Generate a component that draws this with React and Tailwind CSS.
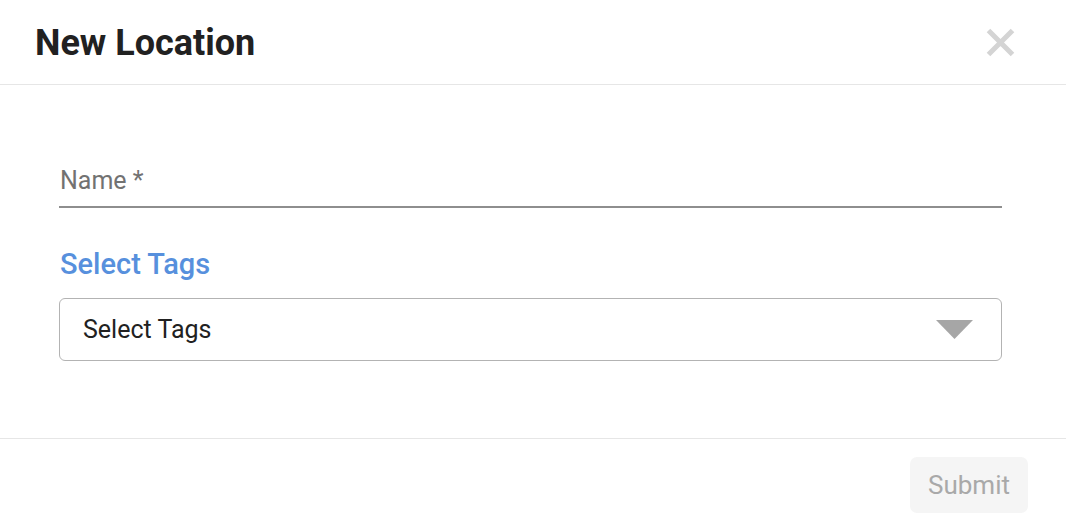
export default function App() {
  return (
    <div className="w-[1066px] h-[526px] bg-white flex flex-col" style={{ fontFamily: 'Roboto, "Liberation Sans", sans-serif' }}>
      <div className="h-[85px] flex items-center justify-between pl-[35px] pr-[51px] border-b border-[#e6e6e6] shrink-0">
        <h1 className="text-[36px] font-bold text-[#212121] leading-none pt-[1px]">New Location</h1>
        <button className="w-[29px] h-[29px] flex items-center justify-center">
          <svg width="29" height="29" viewBox="0 0 29 29">
            <path d="M2.5 2.5 L26.5 26.5 M26.5 2.5 L2.5 26.5" stroke="#d4d4d4" strokeWidth="5" strokeLinecap="butt" />
          </svg>
        </button>
      </div>
      <div className="flex-1 pl-[59px] pr-[64px] flex flex-col">
        <div className="mt-[82px] border-b-2 border-[#8e8e8e] pb-[11px] pl-[1px]">
          <span className="block text-[25px] text-[#727272] leading-[28px]">Name *</span>
        </div>
        <div className="mt-[40px] pl-[1px] text-[29px] font-medium text-[#5790dd] leading-[32px]">Select Tags</div>
        <div className="mt-[18px] h-[63px] border border-[#b3b3b3] rounded-[6px] flex items-center justify-between pl-[23px] pr-[28px]">
          <span className="text-[25px] text-[#212121]">Select Tags</span>
          <svg width="37" height="19" viewBox="0 0 37 19">
            <path d="M0 0 L37 0 L18.5 19 Z" fill="#a6a6a6" />
          </svg>
        </div>
      </div>
      <div className="h-[88px] border-t border-[#e6e6e6] flex items-start justify-end pr-[38px] pt-[18px] shrink-0">
        <button className="w-[118px] h-[56px] bg-[#f5f5f5] rounded-[7px] text-[26px] text-[#a9a9a9]">Submit</button>
      </div>
    </div>
  );
}
